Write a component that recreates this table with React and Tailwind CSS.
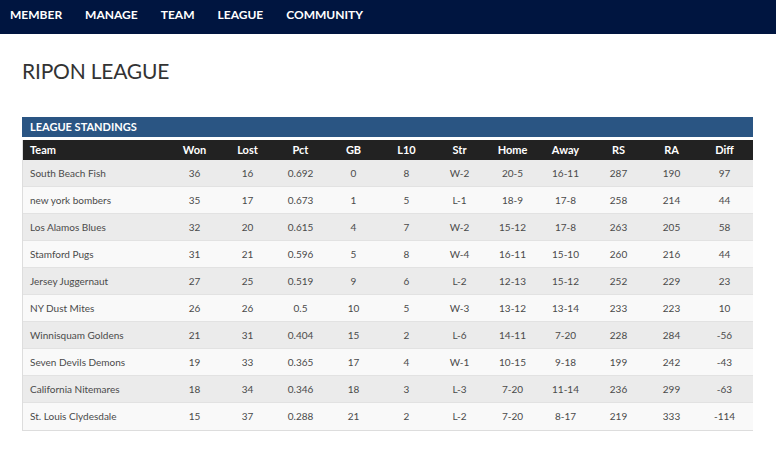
import React from 'react';

const NAV = ['MEMBER', 'MANAGE', 'TEAM', 'LEAGUE', 'COMMUNITY'];

const COLS = ['Won', 'Lost', 'Pct', 'GB', 'L10', 'Str', 'Home', 'Away', 'RS', 'RA', 'Diff'];

const ROWS = [
    ['South Beach Fish', 36, 16, '0.692', 0, 8, 'W-2', '20-5', '16-11', 287, 190, 97],
    ['new york bombers', 35, 17, '0.673', 1, 5, 'L-1', '18-9', '17-8', 258, 214, 44],
    ['Los Alamos Blues', 32, 20, '0.615', 4, 7, 'W-2', '15-12', '17-8', 263, 205, 58],
    ['Stamford Pugs', 31, 21, '0.596', 5, 8, 'W-4', '16-11', '15-10', 260, 216, 44],
    ['Jersey Juggernaut', 27, 25, '0.519', 9, 6, 'L-2', '12-13', '15-12', 252, 229, 23],
    ['NY Dust Mites', 26, 26, '0.5', 10, 5, 'W-3', '13-12', '13-14', 233, 223, 10],
    ['Winnisquam Goldens', 21, 31, '0.404', 15, 2, 'L-6', '14-11', '7-20', 228, 284, -56],
    ['Seven Devils Demons', 19, 33, '0.365', 17, 4, 'W-1', '10-15', '9-18', 199, 242, -43],
    ['California Nitemares', 18, 34, '0.346', 18, 3, 'L-3', '7-20', '11-14', 236, 299, -63],
    ['St. Louis Clydesdale', 15, 37, '0.288', 21, 2, 'L-2', '7-20', '8-17', 219, 333, -114],
];

export default function App() {
    return (
        <div className="w-[776px] h-[461px] bg-white overflow-hidden" style={{ fontFamily: 'Lato, "Open Sans", sans-serif' }}>
            {/* Top nav */}
            <div className="h-[34px] bg-[#001540] flex items-center pl-[10px] gap-[23px]">
                {NAV.map(n => (
                    <span key={n} className="text-white text-[12px] font-bold pb-[4px]">{n}</span>
                ))}
            </div>

            <div className="px-[22px]">
                <h1 className="text-[#333] text-[21px] mt-[23px] leading-[28px] tracking-[-0.2px]">RIPON LEAGUE</h1>

                {/* Standings */}
                <div className="mt-[32px] w-[731px]">
                    <div className="h-[20px] bg-[#2a5583] flex items-center pl-[8px] text-white text-[11px] font-bold">
                        LEAGUE STANDINGS
                    </div>
                    <div className="border-l border-b border-[#ddd] mt-[3px]">
                        <div className="flex h-[20px] bg-[#222] text-white text-[11px] font-bold items-center">
                            <div className="w-[145px] pl-[7px]">Team</div>
                            {COLS.map(c => (
                                <div key={c} className="w-[53px] text-center">{c}</div>
                            ))}
                        </div>
                        {ROWS.map((r, i) => (
                            <div key={r[0]} className={`flex h-[27px] items-center text-[10px] text-[#4a4a4a] border-b border-[#e2e2e2] last:border-b-0 ${i % 2 === 0 ? 'bg-[#ebebeb]' : 'bg-[#f9f9f9]'}`}>
                                <div className="w-[145px] pl-[7px]">{r[0]}</div>
                                {r.slice(1).map((v, j) => (
                                    <div key={j} className="w-[53px] text-center">{v}</div>
                                ))}
                            </div>
                        ))}
                    </div>
                </div>
            </div>
        </div>
    );
}
